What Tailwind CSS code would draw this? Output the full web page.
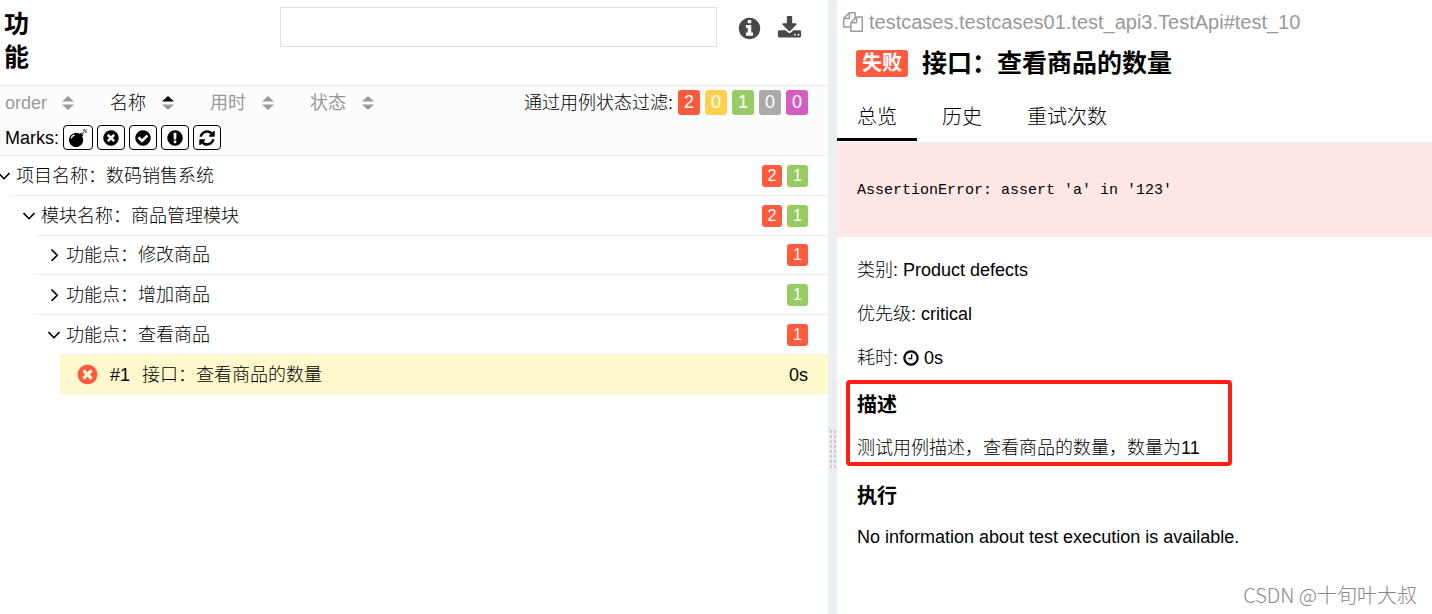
<!DOCTYPE html>
<html lang="zh-CN">
<head>
<meta charset="utf-8">
<meta name="viewport" content="width=device-width, initial-scale=1">
<title>功能</title>
<script src="https://cdn.jsdelivr.net/npm/@tailwindcss/browser@4"></script>
</head>
<body class="flex min-h-screen overflow-x-hidden bg-white font-['Liberation_Sans','Noto_Sans_CJK_SC',sans-serif] text-lg font-light text-black">

<svg class="hidden" aria-hidden="true">
  <symbol id="info" viewBox="0 0 1792 1792"><path d="M1152 1376v-160q0-14-9-23t-23-9h-96v-512q0-14-9-23t-23-9h-320q-14 0-23 9t-9 23v160q0 14 9 23t23 9h96v320h-96q-14 0-23 9t-9 23v160q0 14 9 23t23 9h448q14 0 23-9t9-23zm-128-896v-160q0-14-9-23t-23-9h-192q-14 0-23 9t-9 23v160q0 14 9 23t23 9h192q14 0 23-9t9-23zm640 416q0 209-103 385.500t-279.500 279.500-385.500 103-385.500-103-279.500-279.500-103-385.500 103-385.500 279.500-279.500 385.500-103 385.500 103 279.500 279.500 103 385.500z"/></symbol>
  <symbol id="download" viewBox="0 0 1792 1792"><path d="M1344 1344q0-26-19-45t-45-19-45 19-19 45 19 45 45 19 45-19 19-45zm256 0q0-26-19-45t-45-19-45 19-19 45 19 45 45 19 45-19 19-45zm128-224v320q0 40-28 68t-68 28h-1472q-40 0-68-28t-28-68v-320q0-40 28-68t68-28h465l135 136q58 56 136 56t136-56l136-136h464q40 0 68 28t28 68zm-325-569q17 41-14 70l-448 448q-18 19-45 19t-45-19l-448-448q-31-29-14-70 17-39 59-39h256v-448q0-26 19-45t45-19h256q26 0 45 19t19 45v448h256q42 0 59 39z"/></symbol>
  <symbol id="bomb" viewBox="0 0 1792 1792"><path d="M571 589q-10-25-34-35t-49 0q-108 44-191 127t-127 191q-10 25 0 49t35 34q13 5 24 5 42 0 60-40 34-84 98.500-148.500t148.500-98.500q25-11 35-35t0-49zm942-356l46 46-244 243 68 68q19 19 19 45.500t-19 45.500l-64 64q89 161 89 343 0 143-55.500 273.500t-150 225-225 150-273.500 55.500-273.500-55.500-225-150-150-225-55.500-273.500 55.500-273.500 150-225 225-150 273.500-55.500q182 0 343 89l64-64q19-19 45.500-19t45.500 19l68 68zm8-56q-10 10-22 10-13 0-23-10l-91-90q-9-10-9-23t9-23q10-9 23-9t23 9l90 91q10 9 10 22.500t-10 22.500zm230 230q-11 9-23 9t-23-9l-90-91q-10-9-10-22.500t10-22.500q9-10 22.500-10t22.500 10l91 90q9 10 9 23t-9 23zm41-183q0 14-9 23t-23 9h-96q-14 0-23-9t-9-23 9-23 23-9h96q14 0 23 9t9 23zm-192-192v96q0 14-9 23t-23 9-23-9-9-23v-96q0-14 9-23t23-9 23 9 9 23zm151 55l-91 90q-10 10-22 10-13 0-23-10-10-9-10-22.500t10-22.500l90-91q10-9 23-9t23 9q9 10 9 23t-9 23z"/></symbol>
  <symbol id="times" viewBox="0 0 1792 1792"><path d="M1277 1122q0-26-19-45l-181-181 181-181q19-19 19-45 0-27-19-46l-90-90q-19-19-46-19-26 0-45 19l-181 181-181-181q-19-19-45-19-27 0-46 19l-90 90q-19 19-19 46 0 26 19 45l181 181-181 181q-19 19-19 45 0 27 19 46l90 90q19 19 46 19 26 0 45-19l181-181 181 181q19 19 45 19 27 0 46-19l90-90q19-19 19-46zm387-226q0 209-103 385.500t-279.500 279.500-385.500 103-385.500-103-279.500-279.500-103-385.500 103-385.500 279.500-279.500 385.500-103 385.500 103 279.500 279.500 103 385.500z"/></symbol>
  <symbol id="check" viewBox="0 0 1792 1792"><path d="M1412 734q0-28-18-46l-91-90q-19-19-45-19t-45 19l-408 407-226-226q-19-19-45-19t-45 19l-91 90q-18 18-18 46 0 27 18 45l362 362q19 19 45 19 27 0 46-19l543-543q18-18 18-45zm252 162q0 209-103 385.500t-279.500 279.500-385.500 103-385.500-103-279.500-279.500-103-385.500 103-385.500 279.500-279.500 385.500-103 385.500 103 279.500 279.500 103 385.500z"/></symbol>
  <symbol id="exclamation" viewBox="0 0 1792 1792"><path d="M896 128q209 0 385.500 103t279.500 279.500 103 385.500-103 385.500-279.500 279.500-385.500 103-385.500-103-279.500-279.500-103-385.500 103-385.500 279.500-279.500 385.500-103zm128 1247v-190q0-14-9-23.500t-22-9.500h-192q-13 0-23 10t-10 23v190q0 13 10 23t23 10h192q13 0 22-9.500t9-23.500zm-2-344l18-621q0-12-10-18-10-8-24-8h-220q-14 0-24 8-10 6-10 18l17 621q0 10 10 17.500t24 7.500h185q14 0 23.500-7.500t10.500-17.500z"/></symbol>
  <symbol id="refresh" viewBox="0 0 1792 1792"><path d="M1639 1056q0 5-1 7-64 268-268 434.500t-478 166.500q-146 0-282.500-55t-243.500-157l-129 129q-19 19-45 19t-45-19-19-45v-448q0-26 19-45t45-19h448q26 0 45 19t19 45-19 45l-137 137q71 66 161 102t187 36q134 0 250-65t186-179q11-17 53-117 8-23 30-23h192q13 0 22.500 9.500t9.500 22.500zm25-800v448q0 26-19 45t-45 19h-448q-26 0-45-19t-19-45 19-45l138-138q-148-137-349-137-134 0-250 65t-186 179q-11 17-53 117-8 23-30 23h-199q-13 0-22.500-9.500t-9.500-22.500v-7q65-268 270-434.500t480-166.500q146 0 284 55.500t245 156.500l130-129q19-19 45-19t45 19 19 45z"/></symbol>
  <symbol id="clock" viewBox="0 0 1792 1792"><path d="M1024 544v448q0 14-9 23t-23 9h-320q-14 0-23-9t-9-23v-64q0-14 9-23t23-9h224v-352q0-14 9-23t23-9h64q14 0 23 9t9 23zm416 352q0-148-73-273t-198-198-273-73-273 73-198 198-73 273 73 273 198 198 273 73 273-73 198-198 73-273zm224 0q0 209-103 385.500t-279.500 279.500-385.500 103-385.500-103-279.500-279.500-103-385.500 103-385.500 279.500-279.500 385.500-103 385.500 103 279.500 279.500 103 385.500z"/></symbol>
  <symbol id="files" viewBox="0 0 1792 1792"><path d="M1696 384q40 0 68 28t28 68v1216q0 40-28 68t-68 28h-960q-40 0-68-28t-28-68v-288h-544q-40 0-68-28t-28-68v-672q0-40 20-88t48-76l408-408q28-28 76-48t88-20h416q40 0 68 28t28 68v328q68-40 128-40h416zm-544 213l-299 299h299v-299zm-640-384l-299 299h299v-299zm196 647l316-316v-416h-384v416q0 40-28 68t-68 28h-416v640h512v-256q0-40 20-88t48-76zm956 804v-1152h-384v416q0 40-28 68t-68 28h-416v640h896z"/></symbol>
  <symbol id="sort-up" viewBox="0 0 12 14"><path d="M6 0l6 5.500H0z"/></symbol>
  <symbol id="sort-down" viewBox="0 0 12 14"><path d="M6 14L0 8.500h12z"/></symbol>
  <symbol id="open" viewBox="0 0 12 12"><path d="M.5 3L6 8.700 11.500 3" fill="none" stroke="currentColor" stroke-width="1.600"/></symbol>
  <symbol id="closed" viewBox="0 0 12 12"><path d="M3.500 .5L9.200 6.200 3.500 12" fill="none" stroke="currentColor" stroke-width="1.600"/></symbol>
</svg>

<main class="min-w-0 flex-[828]">
  <header class="flex h-[85px] items-start pl-1 pr-[26px]">
    <h1 class="w-7 shrink-0 pt-2 text-[25px] leading-[33px] font-bold">功能</h1>
    <input type="text" aria-label="搜索" class="mt-[7px] ml-auto h-10 w-[437px] min-w-0 border border-[#e0e0e0] px-2 outline-none">
    <button type="button" aria-label="信息" class="mt-4 ml-5 shrink-0 text-[#484848]"><svg class="size-[25px] fill-current"><use href="#info"/></svg></button>
    <button type="button" aria-label="下载" class="mt-4 ml-[15px] shrink-0 text-[#484848]"><svg class="size-[25px] fill-current"><use href="#download"/></svg></button>
  </header>

  <div class="h-[71px] border-y border-[#eceff1] bg-[#fcfcfc] pl-[5px] pr-5 pt-1">
    <div class="flex h-[25px] items-center text-[#999]">
      <button type="button" class="mr-9 flex w-[69px] items-center justify-between">order<svg class="h-3.5 w-3 fill-current"><use href="#sort-up"/><use href="#sort-down"/></svg></button>
      <button type="button" class="mr-9 flex w-16 items-center justify-between text-black">名称<svg class="h-3.5 w-3"><use href="#sort-up" class="fill-black"/><use href="#sort-down" class="fill-[#999]"/></svg></button>
      <button type="button" class="mr-9 flex w-16 items-center justify-between font-normal">用时<svg class="h-3.5 w-3 fill-current"><use href="#sort-up"/><use href="#sort-down"/></svg></button>
      <button type="button" class="flex w-16 items-center justify-between font-normal">状态<svg class="h-3.5 w-3 fill-current"><use href="#sort-up"/><use href="#sort-down"/></svg></button>
      <div class="ml-auto flex items-center gap-[5px] text-white">
        <span class="whitespace-nowrap text-black">通过用例状态过滤:</span>
        <button type="button" class="h-[25px] w-[22px] rounded-[3px] bg-[#fd5a3e] leading-[25px]">2</button>
        <button type="button" class="h-[25px] w-[22px] rounded-[3px] bg-[#ffd050] leading-[25px]">0</button>
        <button type="button" class="h-[25px] w-[22px] rounded-[3px] bg-[#97cc64] leading-[25px]">1</button>
        <button type="button" class="h-[25px] w-[22px] rounded-[3px] bg-[#aaa] leading-[25px]">0</button>
        <button type="button" class="h-[25px] w-[22px] rounded-[3px] bg-[#d35ebe] leading-[25px]">0</button>
      </div>
    </div>
    <div class="mt-2.5 flex h-[25px] items-center gap-1">
      <span>Marks:</span>
      <button type="button" aria-label="新失败" class="flex h-[25px] w-[30px] items-center justify-center rounded-[4px] border border-black"><svg class="size-[18px]"><use href="#bomb"/></svg></button>
      <button type="button" aria-label="失败" class="flex h-[25px] w-7 items-center justify-center rounded-[4px] border border-black"><svg class="size-[18px]"><use href="#times"/></svg></button>
      <button type="button" aria-label="通过" class="flex h-[25px] w-7 items-center justify-center rounded-[4px] border border-black"><svg class="size-[18px]"><use href="#check"/></svg></button>
      <button type="button" aria-label="警告" class="flex h-[25px] w-7 items-center justify-center rounded-[4px] border border-black"><svg class="size-[18px]"><use href="#exclamation"/></svg></button>
      <button type="button" aria-label="重试" class="flex h-[25px] w-7 items-center justify-center rounded-[4px] border border-black"><svg class="size-[18px]"><use href="#refresh"/></svg></button>
    </div>
  </div>

  <ul>
    <li>
      <div class="flex h-[39px] items-center gap-[5px] pr-5">
        <svg class="-ml-[2px] mr-px size-3"><use href="#open"/></svg>
        <span class="mr-auto">项目名称：数码销售系统</span>
        <span class="w-5 rounded-[3px] bg-[#fd5a3e] text-center text-base leading-[22px] text-white">2</span>
        <span class="w-[21px] rounded-[3px] bg-[#97cc64] text-center text-base leading-[22px] text-white">1</span>
      </div>
      <ul class="ml-2.5">
        <li>
          <div class="flex h-10 items-center gap-[5px] border-t border-[#eceff1] pl-[13px] pr-5">
            <svg class="mr-px size-3"><use href="#open"/></svg>
            <span class="mr-auto">模块名称：商品管理模块</span>
            <span class="w-5 rounded-[3px] bg-[#fd5a3e] text-center text-base leading-[22px] text-white">2</span>
            <span class="w-[21px] rounded-[3px] bg-[#97cc64] text-center text-base leading-[22px] text-white">1</span>
          </div>
          <ul class="ml-[25px]">
            <li class="flex h-[39px] items-center gap-[5px] border-t border-[#eceff1] pl-[13px] pr-5">
              <svg class="mr-px size-3"><use href="#closed"/></svg>
              <span class="mr-auto">功能点：修改商品</span>
              <span class="w-[21px] rounded-[3px] bg-[#fd5a3e] text-center text-base leading-[22px] text-white">1</span>
            </li>
            <li class="flex h-10 items-center gap-[5px] border-t border-[#eceff1] pl-[13px] pr-5">
              <svg class="mr-px size-3"><use href="#closed"/></svg>
              <span class="mr-auto">功能点：增加商品</span>
              <span class="w-[21px] rounded-[3px] bg-[#97cc64] text-center text-base leading-[22px] text-white">1</span>
            </li>
            <li>
              <div class="flex h-10 items-center gap-[5px] border-t border-[#eceff1] pl-[13px] pr-5">
                <svg class="mr-px size-3"><use href="#open"/></svg>
                <span class="mr-auto">功能点：查看商品</span>
                <span class="w-[21px] rounded-[3px] bg-[#fd5a3e] text-center text-base leading-[22px] text-white">1</span>
              </div>
              <ul class="ml-[25px]">
                <li>
                  <a href="#test_10" class="flex h-10 items-center border-t border-[#eceff1] bg-[#fff8cc] pl-4 pr-5">
                    <svg class="mr-[11px] size-[23px] fill-[#fd5a3e]"><use href="#times"/></svg>
                    <span class="w-8">#1</span>
                    <span class="mr-auto">接口：查看商品的数量</span>
                    <span>0s</span>
                  </a>
                </li>
              </ul>
            </li>
          </ul>
        </li>
      </ul>
    </li>
  </ul>
</main>

<div role="separator" aria-orientation="vertical" class="w-[9px] shrink-0 bg-[#eceff1] pt-[430px]">
  <div class="ml-0.5 h-[38px] w-1.5 bg-[repeating-linear-gradient(to_bottom,transparent_0_3px,#eceff1_3px_5px),repeating-linear-gradient(to_right,#ccc_0_2px,#eceff1_2px_4px)]"></div>
</div>

<aside class="flex min-w-0 flex-[595] flex-col">
  <div class="flex h-11 items-center gap-1.5 pl-1.5 text-xl text-[#999]">
    <button type="button" aria-label="复制"><svg class="size-5 fill-current"><use href="#files"/></svg></button>
    <span>testcases.testcases01.test_api3.TestApi#test_10</span>
  </div>
  <h2 class="flex h-[38px] items-center gap-3.5 pl-[19px] text-[25px] font-bold">
    <span class="rounded-[3px] bg-[#fd5a3e] px-1.5 text-xl leading-[27px] text-white">失败</span>
    <span>接口：查看商品的数量</span>
  </h2>
  <nav class="mt-2 flex h-[53px] gap-[5px] border-b border-[#eceff1] pb-px text-xl">
    <a href="#overview" class="border-b-3 border-black px-5 pt-1 leading-[46px]">总览</a>
    <a href="#history" class="px-5 pt-1 leading-[46px]">历史</a>
    <a href="#retries" class="px-5 pt-1 leading-[46px]">重试次数</a>
  </nav>
  <pre class="bg-[#ffe6e6] px-5 pt-[37px] pb-[35px] font-['Liberation_Mono',monospace] text-[15px] leading-[22px]">AssertionError: assert 'a' in '123'</pre>
  <div class="mt-[21px] flex flex-col gap-5 px-5 leading-6">
    <div class="h-6">类别: Product defects</div>
    <div class="h-6">优先级: critical</div>
    <div class="flex h-6 items-center gap-1"><span>耗时:</span><svg class="size-[18px]"><use href="#clock"/></svg><span>0s</span></div>
  </div>
  <section class="mt-2.5 ml-[9px] h-[86px] w-[386px] max-w-full rounded-[4px] border-4 border-[#ff1e14] px-[7px] pt-[7px]">
    <h3 class="text-xl leading-7 font-bold">描述</h3>
    <p class="mt-[17px] leading-6">测试用例描述，查看商品的数量，数量为11</p>
  </section>
  <section class="mt-4 px-5">
    <h3 class="text-xl leading-7 font-bold">执行</h3>
    <p class="mt-[15px] leading-6">No information about test execution is available.</p>
  </section>
  <footer class="mt-auto pr-[15px] pb-[5px] text-right font-['Noto_Sans_CJK_SC',sans-serif] text-xl text-[#888]">CSDN @十旬叶大叔</footer>
</aside>
</body>
</html>
